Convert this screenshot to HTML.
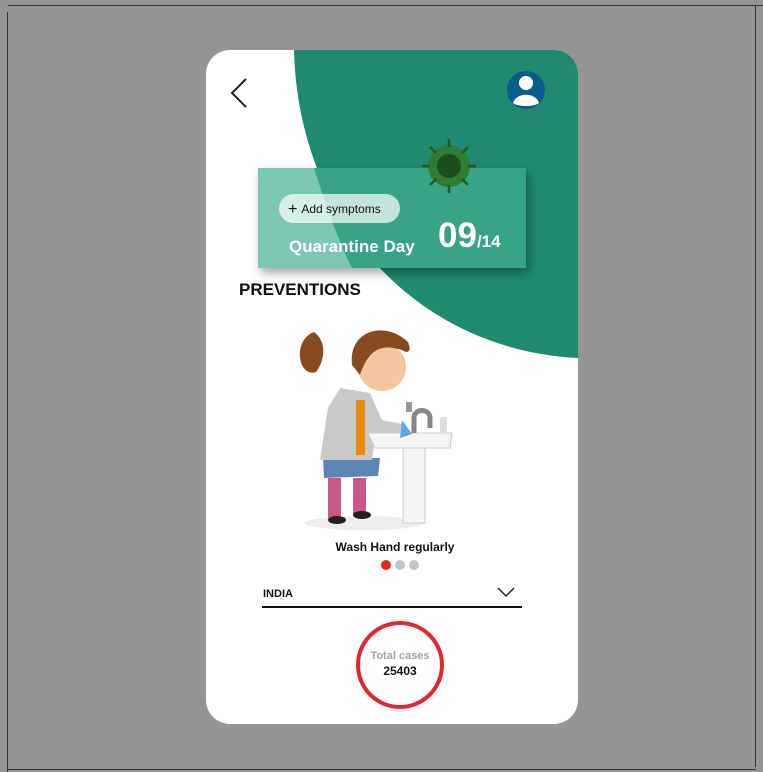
<!DOCTYPE html>
<html><head><meta charset="utf-8"><style>
html,body{margin:0;padding:0}
body{width:763px;height:772px;background:#959393;position:relative;overflow:hidden;font-family:"Liberation Sans",sans-serif}
.abs{position:absolute}
.card{left:206px;top:50px;width:372px;height:674px;background:#fff;border-radius:24px;overflow:hidden}
</style></head><body>
<div class="abs" style="left:8px;top:5px;width:755px;height:1px;background:#333"></div>
<div class="abs" style="left:7px;top:12px;width:1px;height:760px;background:#333"></div>
<div class="abs" style="left:755px;top:5px;width:1px;height:762px;background:#333"></div>
<div class="abs" style="left:8px;top:769px;width:748px;height:1px;background:#333"></div>
<div class="abs card">
<svg class="abs" style="left:0;top:0" width="372" height="674">
<path d="M88 0 C92 170 210 300 372 308 L372 0 Z" fill="#1f8a70"/>
<path d="M40 29 L26 43 L40 57" fill="none" stroke="#222" stroke-width="2"/>
<circle cx="320" cy="40" r="19" fill="#0d5b8a"/>
<circle cx="320" cy="33" r="7" fill="#fff"/>
<path d="M307 53 C310 42 330 42 333 53 C328 57 312 57 307 53Z" fill="#fff"/>
<defs><filter id="s" x="-20%" y="-20%" width="140%" height="160%"><feDropShadow dx="3" dy="5" stdDeviation="5" flood-color="#000" flood-opacity="0.35"/></filter></defs>
<rect x="52" y="118" width="268" height="100" fill="#37a386" filter="url(#s)"/>
<path d="M52 118 L108 118 C118 150 132 190 146 218 L52 218Z" fill="#7cc7b3"/>
<rect x="73" y="144" width="121" height="29" rx="14.5" fill="#fff" opacity="0.7"/>
<circle cx="243" cy="116" r="21" fill="#2e7d32"/>
<circle cx="243" cy="116" r="12" fill="#1b4d1e"/>
<g stroke="#1f5a22" stroke-width="2.5">
<path d="M243 89v8M243 135v8M216 116h8M262 116h8M224 97l6 6M256 129l6 6M262 97l-6 6M224 135l6-6"/>
</g>
<g transform="translate(84,270)">
<ellipse cx="75" cy="203" rx="60" ry="7" fill="#eee"/>
<rect x="38" y="158" width="13" height="40" fill="#c8588a"/>
<rect x="63" y="158" width="13" height="36" fill="#c8588a"/>
<ellipse cx="47" cy="200" rx="9" ry="4" fill="#222"/>
<ellipse cx="72" cy="195" rx="9" ry="4" fill="#222"/>
<path d="M33 138 L90 138 L88 156 L34 158Z" fill="#5b88b5"/>
<path d="M50 68 L80 73 L92 100 L112 104 L110 114 L85 118 L82 140 L30 140 L38 88Z" fill="#c9c9c9"/>
<rect x="66" y="80" width="9" height="55" fill="#e8890c"/>
<path d="M24 12 C2 20 8 58 26 52 C34 42 38 22 24 12Z" fill="#8a4a1f"/>
<circle cx="92" cy="47" r="24" fill="#f2c6a0"/>
<path d="M62 45 C58 10 95 0 118 22 C122 32 118 34 112 30 C95 25 80 25 70 55Z" fill="#8a4a1f"/>
<path d="M116 82 h6 v10 h-6z" fill="#999"/>
<path d="M78 113 L162 113 L160 128 L85 128Z" fill="#f4f4f4" stroke="#ccc"/>
<rect x="113" y="128" width="22" height="75" fill="#f4f4f4" stroke="#ccc"/>
<path d="M124 113 V98 C124 88 140 88 140 98 V108" fill="none" stroke="#888" stroke-width="5"/>
<rect x="150" y="97" width="7" height="16" rx="2" fill="#ddd"/>
<path d="M112 100 l10 14 -12 4z" fill="#5aa9e6"/>
</g>
</svg>
<div class="abs" style="left:82px;top:151px;font-size:12px;color:#111"><span style="font-size:16px;margin-right:4px;vertical-align:-1px">+</span>Add symptoms</div>
<div class="abs" style="left:83px;top:187px;font-size:17px;font-weight:bold;color:#fff">Quarantine Day</div>
<div class="abs" style="left:232px;top:166px;font-size:35px;font-weight:bold;color:#fff">09<span style="font-size:17px">/14</span></div>
<div class="abs" style="left:33px;top:230px;font-size:17px;font-weight:bold;color:#111">PREVENTIONS</div>
<div class="abs" style="left:0;width:378px;top:490px;text-align:center;font-size:12px;font-weight:bold;color:#111">Wash Hand regularly</div>
<div class="abs" style="left:175px;top:510px;width:10px;height:10px;border-radius:50%;background:#e8262a"></div>
<div class="abs" style="left:189px;top:510px;width:10px;height:10px;border-radius:50%;background:#c4c4c4"></div>
<div class="abs" style="left:203px;top:510px;width:10px;height:10px;border-radius:50%;background:#c4c4c4"></div>
<div class="abs" style="left:57px;top:538px;font-size:11px;font-weight:bold;color:#111">INDIA</div>
<svg class="abs" style="left:290px;top:536px" width="20" height="12"><path d="M2 2 L10 10 L18 2" fill="none" stroke="#222" stroke-width="1.5"/></svg>
<div class="abs" style="left:56px;top:556px;width:260px;height:1.5px;background:#111"></div>
<div class="abs" style="left:150px;top:571px;width:80px;height:80px;border:4px solid #e3262b;border-radius:50%"></div>
<div class="abs" style="left:150px;top:600px;width:88px;text-align:center;font-size:11px;font-weight:bold;color:#a5a5a5">Total cases</div>
<div class="abs" style="left:150px;top:614px;width:88px;text-align:center;font-size:12px;font-weight:bold;color:#111">25403</div>
</div>
</body></html>
